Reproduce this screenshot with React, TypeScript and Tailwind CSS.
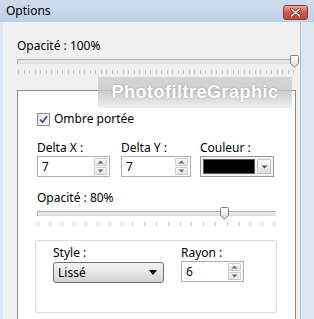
import React from 'react';

const font = "font-['Noto_Sans','DejaVu_Sans',sans-serif]";

// little up/down arrows of a numeric field
const Spinner = () => (
    <div className="flex flex-col gap-[1px]">
        {[0, 1].map((i) => (
            <div key={i} className="w-[13px] h-[8px] border border-[#c9c9c9] rounded-[1px] bg-gradient-to-b from-[#fafafa] to-[#e2e2e2] flex items-center justify-center">
                <svg width="7" height="4" viewBox="0 0 7 4">
                    {i === 0 ? <path d="M0.5 3.5 L3.5 0.5 L6.5 3.5 Z" fill="#6d6d6d" /> : <path d="M0.5 0.5 L3.5 3.5 L6.5 0.5 Z" fill="#6d6d6d" />}
                </svg>
            </div>
        ))}
    </div>
);

const NumberField = ({ value, width }: { value: string; width: string }) => (
    <div className={`${width} h-[21px] border border-[#abadb3] bg-white flex items-center justify-between pl-[4px] pr-[2px]`}>
        <span className="text-[12px] text-black">{value}</span>
        <Spinner />
    </div>
);

const Thumb = () => (
    <svg width="9" height="13" viewBox="0 0 9 13">
        <defs>
            <linearGradient id="th" x1="0" y1="0" x2="0" y2="1">
                <stop offset="0" stopColor="#ffffff" />
                <stop offset="1" stopColor="#dcdcdc" />
            </linearGradient>
        </defs>
        <path d="M1.5 0.5 H7.5 A1 1 0 0 1 8.5 1.5 V8.5 L4.5 12.2 L0.5 8.5 V1.5 A1 1 0 0 1 1.5 0.5 Z" fill="url(#th)" stroke="#7d7d7d" />
    </svg>
);

// track + thumb + tick row
const Slider = ({ width, thumbLeft, ticks }: { width: string; thumbLeft: string; ticks: number }) => (
    <div className={`${width} flex flex-col`}>
        <div className="relative h-[13px] flex items-center">
            <div className="w-full h-[5px] border border-[#b0b0b0] border-b-[#dcdcdc] border-r-[#dcdcdc] bg-[#e7e7e7]" />
            <div className={`absolute top-0 ${thumbLeft}`}>
                <Thumb />
            </div>
        </div>
        <div className="flex justify-between mt-[2px] px-[1px]">
            {Array.from({ length: ticks }).map((_, i) => (
                <span key={i} className="w-px h-[4px] bg-[#c2c2c2]" />
            ))}
        </div>
    </div>
);

const App: React.FC = () => {
    return (
        <div className={`relative w-[314px] h-[319px] overflow-hidden bg-[#dce7f3] flex flex-col ${font} text-[12px] text-black`}>
            {/* title bar */}
            <div className="h-[22px] shrink-0 flex items-center justify-between pl-[6px] pr-[6px] bg-gradient-to-b from-[#cddcec] to-[#bdd0e6]">
                <span className="text-[12px] leading-none">Options</span>
                <div className="w-[25px] h-[15px] mt-[2px] rounded-[3px] border border-[#8d3a30] bg-gradient-to-b from-[#e9a99b] via-[#d0594a] to-[#c4473a] flex items-center justify-center">
                    <svg width="11" height="9" viewBox="0 0 11 9">
                        <path d="M1.5 1 L9.5 8 M9.5 1 L1.5 8" stroke="#6b2a22" strokeWidth="3" strokeLinecap="round" />
                        <path d="M1.5 1 L9.5 8 M9.5 1 L1.5 8" stroke="#ffffff" strokeWidth="1.6" strokeLinecap="round" />
                    </svg>
                </div>
            </div>

            {/* dialog body */}
            <div className="flex-1 ml-[3px] mr-[13px] bg-[#f0f0f0] border-r border-[#b4bcc6] flex flex-col pl-[14px] pt-[16px]">
                <div className="leading-[16px]">Opacité : 100%</div>
                <div className="mt-[1px]">
                    <Slider width="w-[278px]" thumbLeft="left-[273px]" ticks={51} />
                </div>

                {/* white panel */}
                <div className="flex-1 mt-[16px] w-[279px] bg-white border border-[#8b8b8b] border-b-0 pl-[19px] pt-[20px] flex flex-col">
                    <div className="flex items-center gap-[4px] h-[16px]">
                        <div className="w-[13px] h-[13px] border border-[#8f8f8f] bg-gradient-to-br from-[#dfe3ea] to-[#f7f8fa] flex items-center justify-center">
                            <svg width="9" height="9" viewBox="0 0 9 9">
                                <path d="M1 4.5 L3.6 7.2 L8 1.2" fill="none" stroke="#3b4f7f" strokeWidth="1.7" />
                            </svg>
                        </div>
                        <span>Ombre portée</span>
                    </div>

                    <div className="flex mt-[13px]">
                        <div className="w-[84px] flex flex-col">
                            <span className="leading-[16px]">Delta X :</span>
                            <NumberField value="7" width="w-[73px]" />
                        </div>
                        <div className="w-[79px] flex flex-col">
                            <span className="leading-[16px]">Delta Y :</span>
                            <NumberField value="7" width="w-[70px]" />
                        </div>
                        <div className="flex flex-col">
                            <span className="leading-[16px]">Couleur :</span>
                            <div className="w-[74px] h-[21px] border border-[#9a9a9a] bg-[#f4f4f4] flex items-center p-[2px] gap-[2px]">
                                <div className="flex-1 h-full bg-black border border-[#5a5a5a]" />
                                <div className="w-[14px] h-full border border-[#c4c4c4] bg-gradient-to-b from-[#f8f8f8] to-[#dedede] flex items-center justify-center">
                                    <svg width="7" height="4" viewBox="0 0 7 4">
                                        <path d="M0.5 0.5 L3.5 3.5 L6.5 0.5 Z" fill="#555" />
                                    </svg>
                                </div>
                            </div>
                        </div>
                    </div>

                    <div className="leading-[16px] mt-[13px]">Opacité : 80%</div>
                    <div className="mt-[1px]">
                        <Slider width="w-[239px]" thumbLeft="left-[183px]" ticks={21} />
                    </div>

                    {/* group frame */}
                    <div className="ml-[-2px] mt-[14px] w-[242px] h-[73px] border border-[#d5dbe0] rounded-[3px] pl-[17px] pt-[4px] flex gap-[17px]">
                        <div className="flex flex-col">
                            <span className="leading-[16px]">Style :</span>
                            <div className="mt-[1px] w-[111px] h-[21px] rounded-[3px] border border-[#707070] bg-gradient-to-b from-[#f2f2f2] via-[#e6e6e6] to-[#d3d3d3] flex items-center justify-between pl-[4px] pr-[6px]">
                                <span>Lissé</span>
                                <svg width="8" height="5" viewBox="0 0 8 5">
                                    <path d="M0 0 L8 0 L4 5 Z" fill="#000" />
                                </svg>
                            </div>
                        </div>
                        <div className="flex flex-col">
                            <span className="leading-[16px]">Rayon :</span>
                            <NumberField value="6" width="w-[63px]" />
                        </div>
                    </div>
                </div>
            </div>

            {/* watermark over the panel edge */}
            <div className="absolute left-[98px] top-[77px] w-[194px] h-[31px] bg-gradient-to-b from-[#cfcfcf]/80 via-[#c4c4c4]/80 to-[#e4e4e4]/60 flex items-center justify-center">
                <span className="font-['Liberation_Sans',sans-serif] font-bold text-[18px] text-white tracking-[0.5px] [text-shadow:0_0_2px_#9a9a9a]">PhotofiltreGraphic</span>
            </div>
        </div>
    );
};

export default App;
